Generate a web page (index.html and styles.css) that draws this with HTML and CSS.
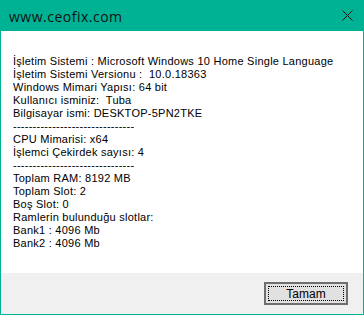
FILE: index.html
```html
<!DOCTYPE html>
<html lang="tr">
<head>
    <meta charset="UTF-8">
    <title>www.ceofix.com</title>
    <link rel="stylesheet" href="styles.css">
</head>
<body>
    <div class="window">
        <div class="titlebar">
            <span class="title">www.ceofix.com</span>
            <svg class="close" width="11" height="11" viewBox="0 0 11 11">
                <path d="M0.5 0.5 L10.5 10.5 M10.5 0.5 L0.5 10.5" stroke="#111" stroke-width="1" fill="none"/>
            </svg>
        </div>
        <div class="content">
            <div>İşletim Sistemi : Microsoft Windows 10 Home Single Language</div>
            <div>İşletim Sistemi Versionu :&nbsp; 10.0.18363</div>
            <div>Windows Mimari Yapısı: 64 bit</div>
            <div>Kullanıcı isminiz:&nbsp; Tuba</div>
            <div>Bilgisayar ismi: DESKTOP-5PN2TKE</div>
            <div>-------------------------------</div>
            <div>CPU Mimarisi: x64</div>
            <div>İşlemci Çekirdek sayısı: 4</div>
            <div>-------------------------------</div>
            <div>Toplam RAM: 8192 MB</div>
            <div>Toplam Slot: 2</div>
            <div>Boş Slot: 0</div>
            <div>Ramlerin bulunduğu slotlar:</div>
            <div>Bank1 : 4096 Mb</div>
            <div>Bank2 : 4096 Mb</div>
        </div>
        <div class="footer">
            <button class="btn"><span class="focus">Tamam</span></button>
        </div>
    </div>
</body>
</html>
```

FILE: styles.css
```css
body {
    margin: 0;
    padding: 0;
    background-color: #fff;
}
.window {
    width: 364px;
    height: 315px;
    box-sizing: border-box;
    border: 1px solid #00b294;
    display: flex;
    flex-direction: column;
    font-family: "Liberation Sans", Arial, sans-serif;
    font-size: 11px;
    color: #000;
}
.titlebar {
    height: 30px;
    background: #00b294;
    display: flex;
    align-items: center;
    justify-content: space-between;
    padding: 0 9px 0 8px;
}
.title {
    font-family: "Open Sans", "Noto Sans", sans-serif;
    font-size: 14px;
    letter-spacing: 0.5px;
    color: #111;
    margin-top: 1px;
}
.close {
    display: block;
    margin-right: 1px;
    margin-top: -1px;
}
.content {
    flex: 1;
    background: #fff;
    padding: 24px 12px 0;
    line-height: 13px;
    letter-spacing: 0.25px;
}
.footer {
    height: 41px;
    background: #f0f0f0;
    display: flex;
    justify-content: flex-end;
    align-items: flex-start;
    padding: 9px 15px 0 0;
    box-sizing: border-box;
}
.btn {
    width: 84px;
    height: 23px;
    box-sizing: border-box;
    border: 2px solid #6f6f6f;
    background: #e1e1e1;
    padding: 2px;
    margin: 0;
    font-family: "Liberation Sans", Arial, sans-serif;
    font-size: 12px;
    color: #000;
    display: flex;
}
.focus {
    flex: 1;
    border: 1px dotted #000;
    display: flex;
    align-items: center;
    justify-content: center;
}
```
